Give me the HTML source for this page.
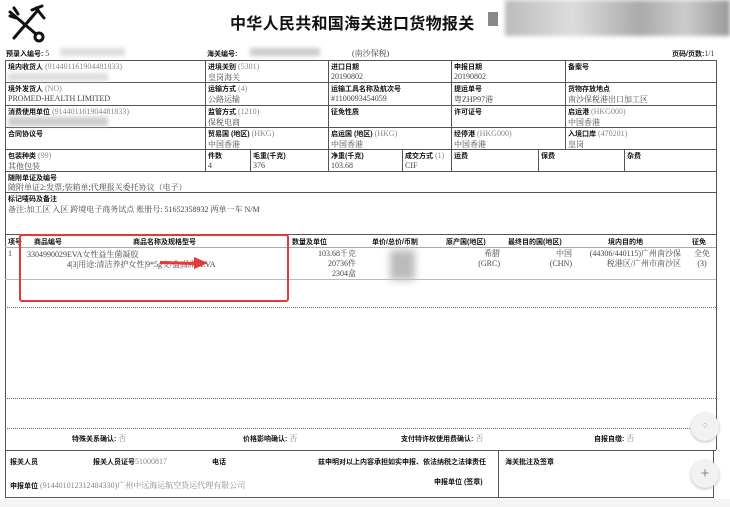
<!DOCTYPE html>
<html><head><meta charset="utf-8"><style>
body{margin:0;width:730px;height:507px;background:#fff;position:relative;overflow:hidden;font-family:"Liberation Serif","Noto Serif CJK SC",serif;color:#333;}
.a{position:absolute;white-space:nowrap;}
.h{position:absolute;height:0;border-top:1px solid #555;}
.v{position:absolute;width:0;border-left:1px solid #555;}
.l{font-family:"Liberation Sans","Noto Sans CJK SC",sans-serif;font-weight:bold;font-size:7px;color:#111;}
.t{font-family:"Liberation Serif","Noto Serif CJK SC",serif;font-weight:normal;font-size:8px;color:#444;}
.g{color:#888;}
</style></head><body>
<svg class="a" style="left:6px;top:4px" width="42" height="40" viewBox="0 0 42 40">
<g stroke="#111" stroke-width="3" fill="none" stroke-linecap="round">
<line x1="4" y1="8" x2="30" y2="30"/><line x1="8" y1="4" x2="12" y2="10"/><line x1="4" y1="12" x2="10" y2="14"/>
<line x1="32" y1="6" x2="8" y2="34"/><circle cx="33" cy="33" r="4"/><path d="M26 6 L36 2 M30 4 L38 14"/>
</g></svg>
<div class="a" style="left:230px;top:10px;font-family:'Liberation Sans','Noto Sans CJK SC',sans-serif;font-weight:bold;font-size:16px;color:#111;letter-spacing:0.3px">中华人民共和国海关进口货物报关</div>
<div class="a" style="left:488px;top:12px;width:10px;height:14px;background:#888"></div>
<div class="a" style="left:505px;top:0;width:225px;height:36px;background:linear-gradient(90deg,#bbb,#ddd 30%,#aaa 60%,#ccc 80%,#999);filter:blur(2px)"></div>

<div class="a l" style="left:6px;top:49px">预录入编号: <span class="t">5</span></div>
<div class="a" style="left:60px;top:48px;width:65px;height:8px;background:#ddd;filter:blur(2px)"></div>
<div class="a l" style="left:207px;top:49px">海关编号:</div>
<div class="a" style="left:250px;top:48px;width:70px;height:8px;background:#ccc;filter:blur(2px)"></div>
<div class="a t" style="left:352px;top:48px">(南沙保税)</div>
<div class="a l" style="left:672px;top:49px">页码/页数:<span class="t">1/1</span></div>

<div class="h" style="left:5px;top:60px;width:712px"></div>
<div class="v" style="left:5px;top:60px;height:438px"></div>
<div class="v" style="left:716px;top:60px;height:390px"></div>
<div class="v" style="left:713px;top:450px;height:48px"></div>
<div class="h" style="left:5px;top:82px;width:711px"></div>
<div class="h" style="left:5px;top:105px;width:711px"></div>
<div class="h" style="left:5px;top:127px;width:711px"></div>
<div class="h" style="left:5px;top:149px;width:711px"></div>
<div class="h" style="left:5px;top:171px;width:711px"></div>
<div class="h" style="left:5px;top:192px;width:711px"></div>
<div class="h" style="left:5px;top:234px;width:711px"></div>
<div class="h" style="left:5px;top:247px;width:711px;border-color:#aaa"></div>
<div class="h" style="left:5px;top:279px;width:711px;border-color:#bbb"></div>
<div class="h" style="left:5px;top:307px;width:711px;border-top:1px dotted #666"></div>
<div class="h" style="left:5px;top:398px;width:711px;border-top:1px dotted #666"></div>
<div class="h" style="left:5px;top:428px;width:711px;border-top:1px dotted #666"></div>
<div class="h" style="left:5px;top:450px;width:711px"></div>
<div class="h" style="left:5px;top:497px;width:708px"></div>
<div class="v" style="left:205px;top:60px;height:111px"></div>
<div class="v" style="left:328px;top:60px;height:111px"></div>
<div class="v" style="left:451px;top:60px;height:111px"></div>
<div class="v" style="left:565px;top:60px;height:89px"></div>
<div class="v" style="left:250px;top:149px;height:22px"></div>
<div class="v" style="left:402px;top:149px;height:22px"></div>
<div class="v" style="left:538px;top:149px;height:22px"></div>
<div class="v" style="left:624px;top:149px;height:22px"></div>
<div class="v" style="left:498px;top:450px;height:47px"></div>

<div class="a l" style="left:8px;top:62px">境内收货人 <span class="t g">(914401161904481833)</span></div>
<div class="a" style="left:8px;top:73px;width:100px;height:8px;background:#ddd;filter:blur(2px)"></div>
<div class="a l" style="left:208px;top:62px">进境关别 <span class="t g">(5301)</span></div><div class="a t" style="left:208px;top:72px">皇岗海关</div>
<div class="a l" style="left:331px;top:62px">进口日期</div><div class="a t" style="left:331px;top:72px">20190802</div>
<div class="a l" style="left:454px;top:62px">申报日期</div><div class="a t" style="left:454px;top:72px">20190802</div>
<div class="a l" style="left:568px;top:62px">备案号</div>
<div class="a l" style="left:8px;top:84px">境外发货人 <span class="t g">(NO)</span></div><div class="a t" style="left:8px;top:94px">PROMED-HEALTH LIMITED</div>
<div class="a l" style="left:208px;top:84px">运输方式 <span class="t g">(4)</span></div><div class="a t" style="left:208px;top:94px">公路运输</div>
<div class="a l" style="left:331px;top:84px">运输工具名称及航次号</div><div class="a t" style="left:331px;top:94px">#1100093454059</div>
<div class="a l" style="left:454px;top:84px">提运单号</div><div class="a t" style="left:454px;top:94px">粤ZHP97港</div>
<div class="a l" style="left:568px;top:84px">货物存放地点</div><div class="a t" style="left:568px;top:94px">南沙保税港出口加工区</div>
<div class="a l" style="left:8px;top:107px">消费使用单位 <span class="t g">(914401161904481833)</span></div>
<div class="a" style="left:8px;top:117px;width:100px;height:9px;background:#ccc;filter:blur(2px)"></div>
<div class="a l" style="left:208px;top:107px">监管方式 <span class="t g">(1210)</span></div><div class="a t" style="left:208px;top:117px">保税电商</div>
<div class="a l" style="left:331px;top:107px">征免性质</div>
<div class="a l" style="left:454px;top:107px">许可证号</div>
<div class="a l" style="left:568px;top:107px">启运港 <span class="t g">(HKG000)</span></div><div class="a t" style="left:568px;top:117px">中国香港</div>
<div class="a l" style="left:8px;top:129px">合同协议号</div>
<div class="a l" style="left:208px;top:129px">贸易国 (地区) <span class="t g">(HKG)</span></div><div class="a t" style="left:208px;top:139px">中国香港</div>
<div class="a l" style="left:331px;top:129px">启运国 (地区) <span class="t g">(HKG)</span></div><div class="a t" style="left:331px;top:139px">中国香港</div>
<div class="a l" style="left:454px;top:129px">经停港 <span class="t g">(HKG000)</span></div><div class="a t" style="left:454px;top:139px">中国香港</div>
<div class="a l" style="left:568px;top:129px">入境口岸 <span class="t g">(470201)</span></div><div class="a t" style="left:568px;top:139px">皇岗</div>
<div class="a l" style="left:8px;top:151px">包装种类 <span class="t g">(99)</span></div><div class="a t" style="left:8px;top:161px">其他包装</div>
<div class="a l" style="left:208px;top:151px">件数</div><div class="a t" style="left:208px;top:161px">4</div>
<div class="a l" style="left:253px;top:151px">毛重(千克)</div><div class="a t" style="left:253px;top:161px">376</div>
<div class="a l" style="left:331px;top:151px">净重(千克)</div><div class="a t" style="left:331px;top:161px">103.68</div>
<div class="a l" style="left:405px;top:151px">成交方式 <span class="t g">(1)</span></div><div class="a t" style="left:405px;top:161px">CIF</div>
<div class="a l" style="left:454px;top:151px">运费</div>
<div class="a l" style="left:541px;top:151px">保费</div>
<div class="a l" style="left:627px;top:151px">杂费</div>
<div class="a l" style="left:8px;top:173px">随附单证及编号</div>
<div class="a t" style="left:8px;top:182px">随附单证2:发票;装箱单;代理报关委托协议（电子）</div>
<div class="a l" style="left:8px;top:194px">标记唛码及备注</div>
<div class="a t" style="left:8px;top:204px">备注:加工区 入区 跨境电子商务试点 账册号: 51652358932 两单一车 N/M</div>
<div class="a l" style="left:8px;top:237px">项号</div>
<div class="a l" style="left:34px;top:237px">商品编号</div>
<div class="a l" style="left:133px;top:237px">商品名称及规格型号</div>
<div class="a l" style="left:292px;top:237px">数量及单位</div>
<div class="a l" style="left:372px;top:237px">单价/总价/币制</div>
<div class="a l" style="left:446px;top:237px">原产国(地区)</div>
<div class="a l" style="left:508px;top:237px">最终目的国(地区)</div>
<div class="a l" style="left:608px;top:237px">境内目的地</div>
<div class="a l" style="left:692px;top:237px">征免</div>
<div class="a t" style="left:8px;top:249px">1</div>
<div class="a t" style="left:27px;top:249px">3304990029EVA女性益生菌凝胶</div>
<div class="a t" style="left:67px;top:259px">4|3|用途:清洁养护女性|9*5g支/盒|品牌:EVA</div>
<div class="a t" style="left:296px;top:249px;text-align:right;width:60px;line-height:10px;white-space:normal">103.68千克<br>20736件<br>2304盒</div>
<div class="a" style="left:390px;top:250px;width:25px;height:30px;background:#bbb;filter:blur(4px)"></div>
<div class="a t" style="left:470px;top:249px;text-align:right;width:30px;line-height:10px">希腊<br>(GRC)</div>
<div class="a t" style="left:540px;top:249px;text-align:right;width:32px;line-height:10px">中国<br>(CHN)</div>
<div class="a t" style="left:581px;top:249px;width:100px;line-height:10px;text-align:right">(44306/440115)广州南沙保<br>税港区/广州市南沙区</div>
<div class="a t" style="left:694px;top:249px;line-height:10px;text-align:center">全免<br>(3)</div>
<div class="a" style="left:19px;top:234px;width:266px;height:64px;border:2px solid #e53935;border-radius:3px"></div>
<svg class="a" style="left:160px;top:256px" width="50" height="14" viewBox="0 0 50 14"><path d="M0 5 L34 6 L34 1 L48 7 L34 13 L34 9 L0 8Z" fill="#e53935"/></svg>
<div class="a l" style="left:72px;top:433px">特殊关系确认: <span class="t g">否</span></div>
<div class="a l" style="left:243px;top:433px">价格影响确认: <span class="t g">否</span></div>
<div class="a l" style="left:401px;top:433px">支付特许权使用费确认: <span class="t g">否</span></div>
<div class="a l" style="left:594px;top:433px">自报自缴: <span class="t g">否</span></div>
<div class="a l" style="left:10px;top:457px">报关人员</div>
<div class="a l" style="left:93px;top:457px">报关人员证号<span class="t g">51000817</span></div>
<div class="a l" style="left:212px;top:457px">电话</div>
<div class="a l" style="left:318px;top:457px">兹申明对以上内容承担如实申报、依法纳税之法律责任</div>
<div class="a l" style="left:505px;top:457px">海关批注及签章</div>
<div class="a l" style="left:10px;top:480px">申报单位 <span class="t g">(914401012312484330)广州中远海运航空货运代理有限公司</span></div>
<div class="a l" style="left:434px;top:477px">申报单位 (签章)</div>
<div class="a" style="left:691px;top:413px;width:28px;height:28px;border-radius:50%;background:#f2f2f2;box-shadow:0 1px 3px #bbb;text-align:center;line-height:28px;font-size:10px;color:#999">⁘</div>
<div class="a" style="left:691px;top:460px;width:28px;height:28px;border-radius:50%;background:#f2f2f2;box-shadow:0 1px 3px #bbb;text-align:center;line-height:27px;font-size:15px;color:#888;font-family:'Liberation Sans',sans-serif">+</div>
<div class="a" style="left:0;top:499px;width:730px;height:8px;background:#f4f4f4"></div>
</body></html>
